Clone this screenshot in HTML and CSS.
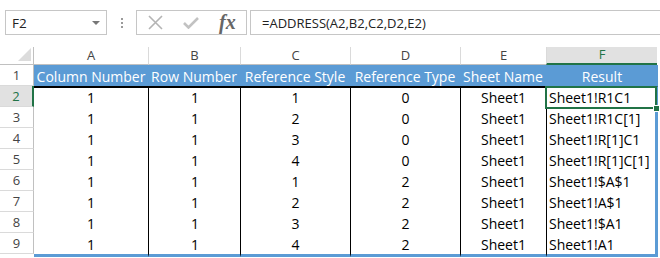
FILE: index.html
```html
<!DOCTYPE html>
<html>
<head>
  <title>ADDRESS function</title>
  <link rel="stylesheet" href="styles.css">
</head>
<body>
  <div class="formula-bar">
    <div class="name-box">F2<span class="drop"></span></div>
    <div class="grip"><i></i><i></i><i></i></div>
    <div class="fx-buttons">
      <svg class="cancel" width="15" height="15" viewBox="0 0 15 15">
        <path d="M1 1 L14 14 M14 1 L1 14" stroke="#b4b4b4" stroke-width="1.6" fill="none"/>
      </svg>
      <svg class="enter" width="16" height="12" viewBox="0 0 16 12">
        <path d="M1 6 L5.5 10.5 L15 1" stroke="#c2c2c2" stroke-width="2.6" fill="none"/>
      </svg>
      <span class="fx">fx</span>
    </div>
    <div class="formula">=ADDRESS(A2,B2,C2,D2,E2)</div>
  </div>

  <div class="sheet">
    <div class="row">
      <div class="corner">
        <svg width="14" height="14" viewBox="0 0 14 14"><path d="M0 13 L13 0 L13 13 Z" fill="#dcdcdc"/></svg>
      </div>
      <div class="ch">A</div>
      <div class="ch">B</div>
      <div class="ch">C</div>
      <div class="ch">D</div>
      <div class="ch">E</div>
      <div class="ch sel">F</div>
    </div>

    <div class="row head">
      <div class="rh">1</div>
      <div>Column Number</div>
      <div>Row Number</div>
      <div>Reference Style</div>
      <div>Reference Type</div>
      <div>Sheet Name</div>
      <div>Result</div>
    </div>

    <div class="row data first">
      <div class="rh sel">2</div>
      <div>1</div><div>1</div><div>1</div><div>0</div><div>Sheet1</div><div>Sheet1!R1C1</div>
    </div>
    <div class="row data">
      <div class="rh">3</div>
      <div>1</div><div>1</div><div>2</div><div>0</div><div>Sheet1</div><div>Sheet1!R1C[1]</div>
    </div>
    <div class="row data">
      <div class="rh">4</div>
      <div>1</div><div>1</div><div>3</div><div>0</div><div>Sheet1</div><div>Sheet1!R[1]C1</div>
    </div>
    <div class="row data">
      <div class="rh">5</div>
      <div>1</div><div>1</div><div>4</div><div>0</div><div>Sheet1</div><div>Sheet1!R[1]C[1]</div>
    </div>
    <div class="row data">
      <div class="rh">6</div>
      <div>1</div><div>1</div><div>1</div><div>2</div><div>Sheet1</div><div>Sheet1!$A$1</div>
    </div>
    <div class="row data">
      <div class="rh">7</div>
      <div>1</div><div>1</div><div>2</div><div>2</div><div>Sheet1</div><div>Sheet1!A$1</div>
    </div>
    <div class="row data">
      <div class="rh">8</div>
      <div>1</div><div>1</div><div>3</div><div>2</div><div>Sheet1</div><div>Sheet1!$A1</div>
    </div>
    <div class="row data last">
      <div class="rh">9</div>
      <div>1</div><div>1</div><div>4</div><div>2</div><div>Sheet1</div><div>Sheet1!A1</div>
    </div>

    <div class="selection"></div>
  </div>
</body>
</html>
```

FILE: styles.css
```css
body {
  margin: 0;
  background: #fff;
  font-family: 'Open Sans', 'Liberation Sans', sans-serif;
  font-size: 14px;
  color: #000;
}
.formula-bar {
  display: flex;
  height: 25px;
  margin-top: 10px;
  padding-left: 5px;
}
.name-box {
  box-sizing: border-box;
  width: 102px;
  border: 1px solid #c6c6c6;
  display: flex;
  align-items: center;
  padding-left: 6px;
  color: #222;
  font-size: 13.5px;
  position: relative;
}
.drop {
  position: absolute;
  right: 6px;
  top: 10px;
  border-left: 4px solid transparent;
  border-right: 4px solid transparent;
  border-top: 4px solid #777;
}
.grip {
  width: 29px;
  display: flex;
  flex-direction: column;
  align-items: center;
  justify-content: center;
  gap: 2px;
}
.grip i {
  width: 2px;
  height: 2px;
  background: #9a9a9a;
}
.fx-buttons {
  box-sizing: border-box;
  width: 111px;
  border: 1px solid #c6c6c6;
  display: flex;
  align-items: center;
  padding-left: 11px;
}
.enter {
  margin-left: 20px;
}
.fx {
  margin-left: 20px;
  font-family: 'Liberation Serif', serif;
  font-style: italic;
  font-weight: bold;
  font-size: 20px;
  color: #666;
  line-height: 1;
  margin-top: -2px;
}
.formula {
  flex: 1;
  margin-left: 3px;
  border: 1px solid #c6c6c6;
  border-right: none;
  display: flex;
  align-items: center;
  padding-left: 11px;
  color: #222;
  font-size: 13px;
}

.sheet {
  position: relative;
  margin-top: 12px;
  display: grid;
  grid-template-columns: 34px 114px 92px 110px 110px 86px 112px;
  grid-template-rows: 18px repeat(8, 21px) 24px;
}
.row {
  display: contents;
}
.row > div {
  box-sizing: border-box;
  display: flex;
  align-items: flex-end;
  justify-content: center;
  line-height: 19px;
  white-space: nowrap;
}
.corner {
  border-right: 1px solid #c0c0c0;
  border-bottom: 1px solid #c0c0c0;
  align-items: flex-end !important;
  justify-content: flex-end !important;
  padding: 0 1px 2px 0;
}
.ch {
  font-size: 13px;
  line-height: 17px !important;
  color: #444;
  border-bottom: 1px solid #c0c0c0;
}
.ch + .ch {
  border-left: 1px solid #dadada;
}
.ch.sel {
  background: #e1e1e1;
  color: #217346;
  border-bottom: 2px solid #217346;
  margin-right: 1px;
}
.rh {
  height: 21px;
  align-self: start;
  font-size: 13px;
  color: #444;
  border-right: 1px solid #c0c0c0;
  border-bottom: 1px solid #dadada;
}
.rh.sel {
  background: #e1e1e1;
  color: #217346;
  border-right: 2px solid #217346;
}
.head > div:not(.rh) {
  background: #5b9bd5;
  color: #fff;
}
.data > div + div + div {
  border-left: 1px solid #000;
}
.data > div:nth-child(3) {
  padding-left: 1px;
}
.data > div:last-child {
  justify-content: flex-start;
  padding-left: 2px;
  border-right: 3px solid #5b9bd5;
}
.first > div:not(.rh) {
  border-top: 2px solid #000;
}
.last > div:not(.rh) {
  border-bottom: 3px solid #5b9bd5;
}
.selection {
  position: absolute;
  left: 545px;
  top: 39px;
  width: 112px;
  height: 23px;
  box-sizing: border-box;
  border: 2px solid #217346;
}
.selection::after {
  content: "";
  position: absolute;
  right: -5px;
  bottom: -5px;
  width: 5px;
  height: 5px;
  background: #217346;
  border: 1px solid #fff;
}
```
